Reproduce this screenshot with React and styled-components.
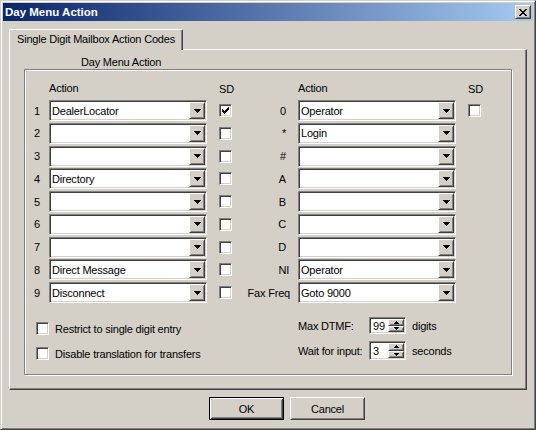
import React from 'react';
import styled, { createGlobalStyle } from 'styled-components';

const GlobalStyle = createGlobalStyle`
  html, body {
    margin: 0;
    padding: 0;
    background: #d4d0c8;
  }
  body {
    font-family: "Liberation Sans", Arial, sans-serif;
    font-size: 11px;
    letter-spacing: -0.2px;
    color: #000;
  }
  * {
    box-sizing: border-box;
  }
`;

const Window = styled.div`
  width: 536px;
  height: 430px;
  background: #d4d0c8;
  border: 1px solid;
  border-color: #d4d0c8 #404040 #404040 #d4d0c8;
  box-shadow: inset 1px 1px 0 #fff, inset -1px -1px 0 #808080;
  padding: 2px;
  display: flex;
  flex-direction: column;
`;

const TitleBar = styled.div`
  height: 18px;
  display: flex;
  align-items: center;
  justify-content: space-between;
  padding: 0 2px 0 2px;
  background: linear-gradient(to right, #0a246a, #a6caf0);
`;

const TitleText = styled.span`
  color: #fff;
  font-weight: bold;
  font-size: 11.5px;
  letter-spacing: 0;
`;

const raised = `
  background: #d4d0c8;
  border: 1px solid;
  border-color: #fff #404040 #404040 #fff;
  box-shadow: inset 1px 1px 0 #d4d0c8, inset -1px -1px 0 #808080;
`;

const sunken = `
  background: #fff;
  border: 1px solid;
  border-color: #808080 #fff #fff #808080;
  box-shadow: inset 1px 1px 0 #404040, inset -1px -1px 0 #d4d0c8;
`;

const CloseButton = styled.div`
  width: 16px;
  height: 14px;
  ${raised}
  display: flex;
  align-items: center;
  justify-content: center;
`;

const Body = styled.div`
  padding: 8px 6px 0 6px;
  display: flex;
  flex-direction: column;
`;

const TabStrip = styled.div`
  height: 20px;
  display: flex;
`;

const Tab = styled.div`
  position: relative;
  z-index: 1;
  width: 174px;
  height: 21px;
  background: #d4d0c8;
  border-top: 1px solid #fff;
  border-left: 1px solid #fff;
  border-right: 1px solid #404040;
  border-radius: 2px 2px 0 0;
  box-shadow: inset -1px 0 0 #808080;
  text-align: center;
  line-height: 19px;
  white-space: nowrap;
`;

const Panel = styled.div`
  width: 518px;
  height: 341px;
  border: 1px solid;
  border-color: #fff #404040 #404040 #fff;
  box-shadow: inset -1px -1px 0 #808080;
  padding: 6px 0 0 14px;
`;

const GroupLabel = styled.div`
  line-height: 13px;
  height: 13px;
  padding-left: 57px;
`;

const Frame = styled.div`
  width: 488px;
  height: 306px;
  border: 1px solid #808080;
  box-shadow: 1px 1px 0 #fff, inset 1px 1px 0 #fff;
  display: flex;
  flex-direction: column;
`;

const Table = styled.div`
  display: grid;
  grid-template-columns: 24px 158px 37px 54px 158px 37px;
  grid-template-rows: 16.25px repeat(9, 21px);
  row-gap: 1.75px;
  padding-top: 12px;
`;

const Head = styled.div`
  line-height: 13px;
  padding-top: ${(p) => p.$drop || 0}px;
  padding-left: ${(p) => p.$indent || 0}px;
`;

const KeyLabel = styled.div`
  display: flex;
  align-items: center;
  justify-content: ${(p) => (p.$right ? 'flex-end' : 'center')};
  padding-right: ${(p) => p.$pad || 0}px;
  white-space: nowrap;
`;

const CheckCell = styled.div`
  display: flex;
  align-items: center;
  padding-left: 12px;
`;

const ComboBox = styled.div`
  width: 158px;
  height: 21px;
  ${sunken}
  padding: 1px;
  display: flex;
  align-items: stretch;
`;

const ComboText = styled.div`
  flex: 1;
  padding-left: 1px;
  display: flex;
  align-items: center;
  white-space: nowrap;
  overflow: hidden;
`;

const DropButton = styled.div`
  width: 16px;
  height: 17px;
  ${raised}
  display: flex;
  align-items: center;
  justify-content: center;
`;

const CheckBox = styled.div`
  width: 13px;
  height: 13px;
  ${sunken}
  display: flex;
  align-items: center;
  justify-content: center;
  flex-shrink: 0;
`;

const Bottom = styled.div`
  margin-top: 14px;
  display: flex;
`;

const Options = styled.div`
  width: 273px;
  padding: 5px 0 0 11px;
  display: flex;
  flex-direction: column;
  gap: 12px;
`;

const Option = styled.div`
  display: flex;
  align-items: center;
  gap: 6px;
  height: 13px;
  white-space: nowrap;
`;

const Settings = styled.div`
  display: flex;
  flex-direction: column;
  gap: 7px;
`;

const Setting = styled.div`
  display: grid;
  grid-template-columns: 71px 37px auto;
  align-items: center;
  white-space: nowrap;
`;

const Unit = styled.span`
  padding-left: 6px;
`;

const Spin = styled.div`
  width: 37px;
  height: ${(p) => p.$h}px;
  ${sunken}
  padding: 1px;
  display: flex;
`;

const SpinText = styled.div`
  flex: 1;
  padding-left: 2px;
  display: flex;
  align-items: center;
`;

const SpinButtons = styled.div`
  width: 16px;
  display: flex;
  flex-direction: column;
`;

const SpinButton = styled.div`
  flex: 1;
  ${raised}
  display: flex;
  align-items: center;
  justify-content: center;
`;

const ButtonRow = styled.div`
  margin-top: 7px;
  padding-left: 200px;
  display: flex;
  gap: 6px;
`;

const PushButton = styled.div`
  width: 75px;
  height: 23px;
  display: flex;
  align-items: center;
  justify-content: center;
  background: #d4d0c8;
  border: 1px solid;
  border-color: ${(p) => (p.$default ? '#000' : '#fff #404040 #404040 #fff')};
  box-shadow: ${(p) =>
    p.$default
      ? 'inset 1px 1px 0 #fff, inset -1px -1px 0 #404040, inset 2px 2px 0 #d4d0c8, inset -2px -2px 0 #808080'
      : 'inset 1px 1px 0 #d4d0c8, inset -1px -1px 0 #808080'};
`;

function Pixels({ rows }) {
  const w = rows[0].length;
  const h = rows.length;
  const rects = [];
  rows.forEach((r, y) =>
    r.split('').forEach((c, x) => {
      if (c === 'x') rects.push(<rect key={`${x}-${y}`} x={x} y={y} width="1" height="1" />);
    })
  );
  return (
    <svg width={w} height={h} viewBox={`0 0 ${w} ${h}`} shapeRendering="crispEdges" fill="#000">
      {rects}
    </svg>
  );
}

const CLOSE = ['xx....xx', '.xx..xx.', '..xxxx..', '...xx...', '..xxxx..', '.xx..xx.', 'xx....xx'];
const DOWN = ['xxxxxxx', '.xxxxx.', '..xxx..', '...x...'];
const CHECK = ['......x', '.....xx', 'x...xxx', 'xx.xxx.', 'xxxxx..', '.xxx...', '..x....'];
const TINY_UP = ['..x..', '.xxx.', 'xxxxx'];
const TINY_DOWN = ['xxxxx', '.xxx.', '..x..'];

function Combo({ value }) {
  return (
    <ComboBox>
      <ComboText>{value}</ComboText>
      <DropButton>
        <Pixels rows={DOWN} />
      </DropButton>
    </ComboBox>
  );
}

function Check({ checked }) {
  return <CheckBox>{checked && <Pixels rows={CHECK} />}</CheckBox>;
}

function SpinBox({ value, h }) {
  return (
    <Spin $h={h}>
      <SpinText>{value}</SpinText>
      <SpinButtons>
        <SpinButton>
          <Pixels rows={TINY_UP} />
        </SpinButton>
        <SpinButton>
          <Pixels rows={TINY_DOWN} />
        </SpinButton>
      </SpinButtons>
    </Spin>
  );
}

const left = [
  { key: '1', value: 'DealerLocator', checked: true },
  { key: '2', value: '' },
  { key: '3', value: '' },
  { key: '4', value: 'Directory' },
  { key: '5', value: '' },
  { key: '6', value: '' },
  { key: '7', value: '' },
  { key: '8', value: 'Direct Message' },
  { key: '9', value: 'Disconnect' },
];

const right = [
  { key: '0', value: 'Operator', box: true },
  { key: '*', value: 'Login' },
  { key: '#', value: '' },
  { key: 'A', value: '' },
  { key: 'B', value: '' },
  { key: 'C', value: '' },
  { key: 'D', value: '' },
  { key: 'NI', value: 'Operator', pad: 9 },
  { key: 'Fax Freq', value: 'Goto 9000', pad: 8 },
];

export default function App() {
  return (
    <>
      <GlobalStyle />
      <Window>
        <TitleBar>
          <TitleText>Day Menu Action</TitleText>
          <CloseButton>
            <Pixels rows={CLOSE} />
          </CloseButton>
        </TitleBar>
        <Body>
          <TabStrip>
            <Tab>Single Digit Mailbox Action Codes</Tab>
          </TabStrip>
          <Panel>
            <GroupLabel>Day Menu Action</GroupLabel>
            <Frame>
              <Table>
                <div />
                <Head>Action</Head>
                <Head $drop={1} $indent={12}>SD</Head>
                <div />
                <Head>Action</Head>
                <Head $drop={1} $indent={12}>SD</Head>
                {left.map((l, i) => {
                  const r = right[i];
                  return (
                    <React.Fragment key={l.key}>
                      <KeyLabel>{l.key}</KeyLabel>
                      <Combo value={l.value} />
                      <CheckCell>
                        <Check checked={l.checked} />
                      </CheckCell>
                      <KeyLabel $right $pad={r.pad || 12}>
                        {r.key}
                      </KeyLabel>
                      <Combo value={r.value} />
                      <CheckCell>{r.box && <Check />}</CheckCell>
                    </React.Fragment>
                  );
                })}
              </Table>
              <Bottom>
                <Options>
                  <Option>
                    <Check />
                    Restrict to single digit entry
                  </Option>
                  <Option>
                    <Check />
                    Disable translation for transfers
                  </Option>
                </Options>
                <Settings>
                  <Setting>
                    <span>Max DTMF:</span>
                    <SpinBox value="99" h={17} />
                    <Unit>digits</Unit>
                  </Setting>
                  <Setting>
                    <span>Wait for input:</span>
                    <SpinBox value="3" h={19} />
                    <Unit>seconds</Unit>
                  </Setting>
                </Settings>
              </Bottom>
            </Frame>
          </Panel>
          <ButtonRow>
            <PushButton $default>OK</PushButton>
            <PushButton>Cancel</PushButton>
          </ButtonRow>
        </Body>
      </Window>
    </>
  );
}
